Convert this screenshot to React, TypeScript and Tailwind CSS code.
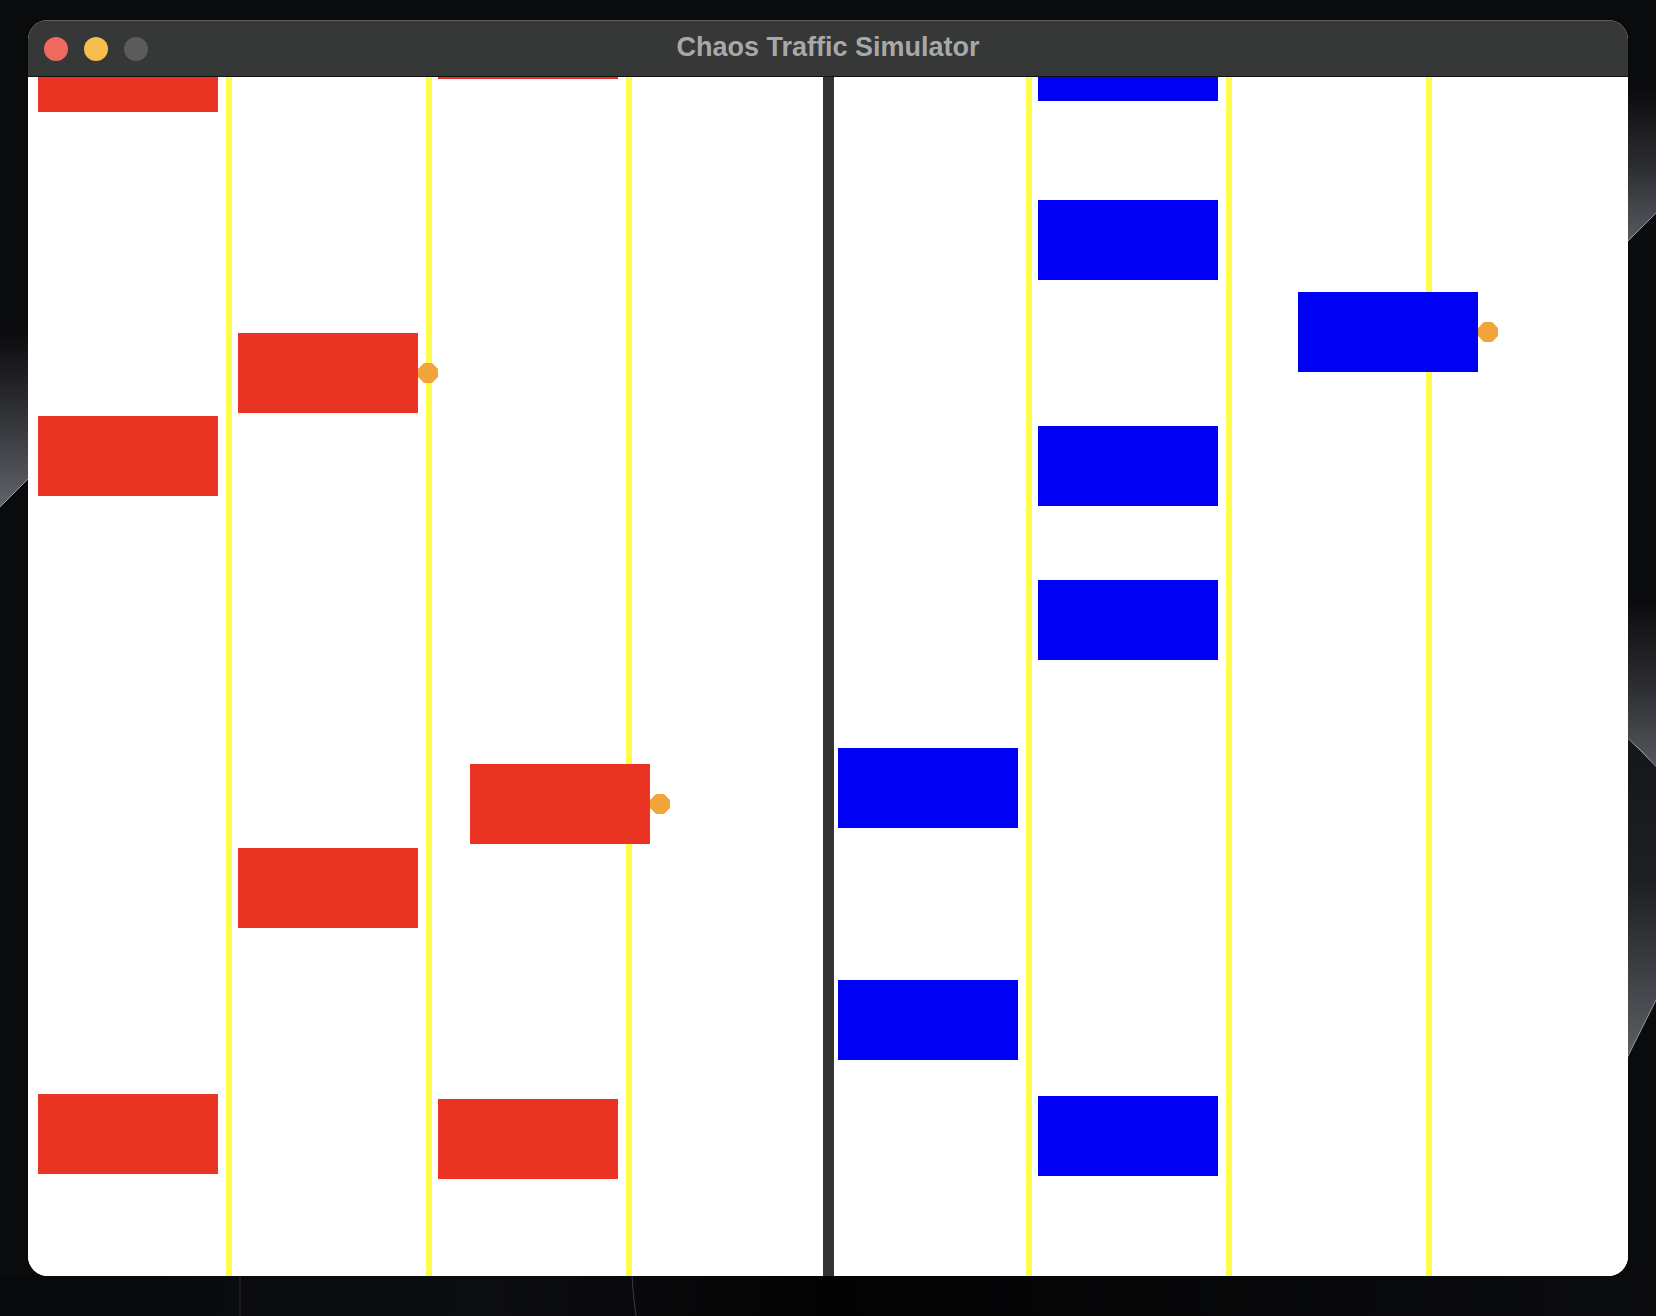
import React from 'react';

type Car = { x: number; y: number; color: 'red' | 'blue'; signal?: boolean };

const cars: Car[] = [
    // red, heading one way
    { x: 10, y: -45, color: 'red' },
    { x: 10, y: 339, color: 'red' },
    { x: 10, y: 1017, color: 'red' },
    { x: 210, y: 256, color: 'red', signal: true },
    { x: 210, y: 771, color: 'red' },
    { x: 410, y: -78, color: 'red' },
    { x: 410, y: 1022, color: 'red' },
    { x: 442, y: 687, color: 'red', signal: true },
    // blue, the other way
    { x: 810, y: 671, color: 'blue' },
    { x: 810, y: 903, color: 'blue' },
    { x: 1010, y: -56, color: 'blue' },
    { x: 1010, y: 123, color: 'blue' },
    { x: 1010, y: 349, color: 'blue' },
    { x: 1010, y: 503, color: 'blue' },
    { x: 1010, y: 1019, color: 'blue' },
    { x: 1270, y: 215, color: 'blue', signal: true },
];

const Signal: React.FC = () => (
    <svg width="20" height="20" viewBox="0 0 20 20" className="absolute -right-[20px] top-[30px]">
        <polygon points="6,0 14,0 20,6 20,14 14,20 6,20 0,14 0,6" fill="#f0a43a" />
    </svg>
);

const CarBox: React.FC<{ car: Car }> = ({ car }) => (
    <div
        className={`absolute w-[180px] h-[80px] ${car.color === 'red' ? 'bg-[#e93323]' : 'bg-[#0000f5]'}`}
        style={{ left: car.x, top: car.y }}
    >
        {car.signal && <Signal />}
    </div>
);

const Lane: React.FC<{ w: string }> = ({ w }) => <div className={`${w} h-full bg-white`} />;
const YellowLine: React.FC = () => <div className="w-[6px] h-full bg-[#fdfc4a]" />;

const Wallpaper: React.FC = () => (
    <svg className="absolute inset-0" width="1656" height="1316" viewBox="0 0 1656 1316">
        <defs>
            <linearGradient id="gl" x1="0" y1="0" x2="0" y2="1">
                <stop offset="0" stopColor="#0a0a0c" />
                <stop offset="0.4" stopColor="#2a2b2f" />
                <stop offset="1" stopColor="#62636a" />
            </linearGradient>
            <linearGradient id="gr1" x1="0" y1="0" x2="0" y2="1">
                <stop offset="0" stopColor="#0c0c0e" />
                <stop offset="0.5" stopColor="#2c2d31" />
                <stop offset="1" stopColor="#5a5b61" />
            </linearGradient>
            <linearGradient id="gr0" x1="0" y1="0" x2="0" y2="1">
                <stop offset="0" stopColor="#0b0b0d" />
                <stop offset="0.5" stopColor="#2b2c30" />
                <stop offset="1" stopColor="#56575c" />
            </linearGradient>
            <linearGradient id="gr2" x1="0" y1="0" x2="0" y2="1">
                <stop offset="0" stopColor="#151619" />
                <stop offset="0.45" stopColor="#1e1f22" />
                <stop offset="1" stopColor="#5e5f65" />
            </linearGradient>
            <linearGradient id="gb" x1="0" y1="0" x2="1" y2="0">
                <stop offset="0" stopColor="#08090a" />
                <stop offset="0.3" stopColor="#0c0d0f" />
                <stop offset="0.5" stopColor="#030304" />
                <stop offset="1" stopColor="#0b0c0e" />
            </linearGradient>
        </defs>
        <polygon points="0,330 30,330 30,477 0,507" fill="url(#gl)" />
        <line x1="30" y1="477" x2="0" y2="507" stroke="#9a9ba0" strokeWidth="1" />
        <polygon points="1626,90 1656,90 1656,213 1626,243" fill="url(#gr1)" />
        <line x1="1626" y1="243" x2="1656" y2="213" stroke="#9a9ba0" strokeWidth="1" />
        <polygon points="1626,600 1656,600 1656,767 1626,737" fill="url(#gr0)" />
        <path d="M1626,737 Q1642,750 1656,767" stroke="#a0a1a6" strokeWidth="1" fill="none" />
        <polygon points="1626,737 1656,767 1656,1000 1626,1060" fill="url(#gr2)" />
        <line x1="1626" y1="1060" x2="1656" y2="1000" stroke="#9a9ba0" strokeWidth="1" />
        <rect x="0" y="1276" width="1656" height="40" fill="url(#gb)" />
        <line x1="240" y1="1276" x2="240" y2="1316" stroke="#2e2f32" strokeWidth="1" />
        <path d="M632,1276 Q633,1296 636,1316" stroke="#3a3b3f" strokeWidth="1" fill="none" />
    </svg>
);

const App: React.FC = () => {
    return (
        <div className="relative w-full h-[1316px] bg-[#0a0b0c] overflow-hidden font-['Liberation_Sans',Arial,sans-serif]">
            <Wallpaper />

            <div className="relative pt-[20px] pl-[28px]">
                <div className="w-[1600px] h-[1256px] rounded-[20px] overflow-hidden flex flex-col bg-white">
                    {/* title bar */}
                    <div className="relative h-[57px] shrink-0 bg-[#363737] border-t border-[#5c5c5c] border-b border-b-[#111] flex items-center pl-[16px] gap-[16px]">
                        <div className="w-[24px] h-[24px] rounded-full bg-[#ee6a5f]" />
                        <div className="w-[24px] h-[24px] rounded-full bg-[#f5be4f]" />
                        <div className="w-[24px] h-[24px] rounded-full bg-[#5a5b5b]" />
                        <div className="absolute inset-0 flex items-center justify-center pointer-events-none pb-[2px]">
                            <span className="text-[27px] font-bold text-[#a8a8a8] leading-none">Chaos Traffic Simulator</span>
                        </div>
                    </div>

                    {/* road */}
                    <div className="relative flex-1 overflow-hidden">
                        <div className="flex h-full">
                            <Lane w="w-[198px]" />
                            <YellowLine />
                            <Lane w="w-[194px]" />
                            <YellowLine />
                            <Lane w="w-[194px]" />
                            <YellowLine />
                            <Lane w="w-[191px]" />
                            <div className="w-[11px] h-full bg-[#333333]" />
                            <Lane w="w-[192px]" />
                            <YellowLine />
                            <Lane w="w-[194px]" />
                            <YellowLine />
                            <Lane w="w-[194px]" />
                            <YellowLine />
                            <Lane w="flex-1" />
                        </div>
                        {cars.map((car, i) => (
                            <CarBox key={i} car={car} />
                        ))}
                    </div>
                </div>
            </div>
        </div>
    );
};

export default App;
